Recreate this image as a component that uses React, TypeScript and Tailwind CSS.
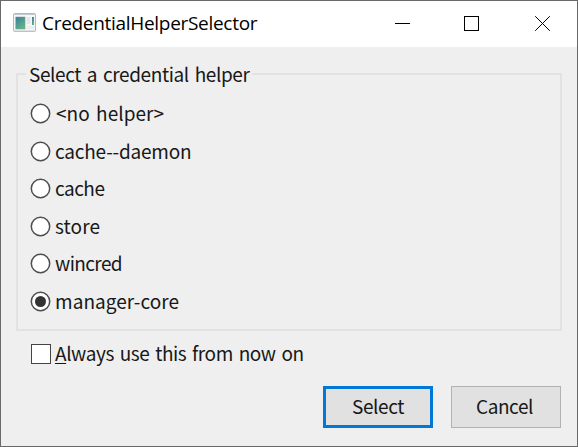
const helpers = [
  { name: '<no helper>', text: 'ml-[5px] tracking-[0.05px] [word-spacing:2px]' },
  { name: 'cache--daemon', text: 'ml-[4px] tracking-[-0.2px]' },
  { name: 'cache', text: 'ml-[4px] tracking-[-0.5px]' },
  { name: 'store', text: 'ml-[4px] tracking-[0.1px]' },
  { name: 'wincred', text: 'ml-[4px] tracking-[-0.6px]' },
  { name: 'manager-core', text: 'ml-[4px] tracking-[0.05px]' },
];

function AppIcon() {
  return (
    <svg width="24" height="20" viewBox="0 0 24 20">
      <defs>
        <linearGradient id="pane" x1="0" y1="0" x2="0.6" y2="1">
          <stop offset="0" stopColor="#397d9e" />
          <stop offset="1" stopColor="#62b583" />
        </linearGradient>
      </defs>
      <rect x="0.5" y="0.5" width="22" height="18" rx="1" fill="#f5f6f7" stroke="#b1b8c2" />
      <path d="M1 1.5H22M1 18H22" stroke="#c4cad1" />
      <rect x="2.8" y="4" width="9.2" height="12" fill="url(#pane)" stroke="#78958f" strokeWidth="0.5" />
      <rect x="13.5" y="4" width="4" height="7" fill="#e5e8e9" />
      <rect x="19" y="4" width="2" height="8" fill="url(#pane)" />
      <rect x="13.5" y="13" width="7.5" height="3" fill="#eceeee" />
    </svg>
  );
}

function TitleBar() {
  return (
    <header className="flex h-[46px] shrink-0 bg-white pl-[12px]">
      <div className="mt-[12px] w-[24px]"><AppIcon /></div>
      <h1 className="ml-[5px] mt-[8px] whitespace-nowrap font-['Open_Sans','Noto_Sans',sans-serif] text-[19px] leading-[28px] tracking-[-0.3px] text-black">CredentialHelperSelector</h1>
      <svg className="ml-auto shrink-0" width="210" height="46" viewBox="367 1 210 46" fill="none" stroke="#000">
        <path d="M395 23.5H410" />
        <rect x="464.5" y="16.5" width="14" height="14" />
        <path d="M535.2 16.2L549.8 30.8M549.8 16.2L535.2 30.8" />
      </svg>
    </header>
  );
}

export default function App() {
  return (
    <main className="flex h-[447px] w-[578px] flex-col overflow-hidden border border-[#69696a] bg-[#efefef] font-['Noto_Sans_CJK_SC',sans-serif] text-[19px] leading-[24px] text-[#181818]">
      <TitleBar />
      <fieldset className="mx-[15px] mt-[15px] h-[269px] min-w-0 shrink-0 border-2 border-[#e2e2e2] pl-[12px]">
        <legend className="-ml-[4px] h-[24px] whitespace-nowrap px-[3px] tracking-[-0.4px] [word-spacing:2px]">Select a credential helper</legend>
        <div className="mt-[15px] flex flex-col">
          {helpers.map((helper) => (
            <label key={helper.name} className="flex h-[37.5px] items-start">
              <svg className="mt-[2px] shrink-0" width="21" height="21" viewBox="0 0 21 21">
                <circle cx="10.5" cy="10.5" r="9.2" fill="#fff" stroke="#4e4e4e" strokeWidth="1.5" />
                {helper.name === 'manager-core' && <circle cx="10.5" cy="10.5" r="5.5" fill="#333" />}
              </svg>
              <span className={`whitespace-nowrap ${helper.text}`}>{helper.name}</span>
            </label>
          ))}
        </div>
      </fieldset>
      <label className="ml-[30px] mt-[10px] flex h-[25px] shrink-0">
        <span className="mt-[3px] size-[20px] shrink-0 border-[1.5px] border-[#444] bg-white" />
        <span className="ml-[4px] whitespace-nowrap tracking-[-0.43px] [word-spacing:2px]"><span className="underline decoration-1 underline-offset-2">A</span>lways use this from now on</span>
      </label>
      <div className="mr-[16px] mt-[20px] flex justify-end gap-[18px]">
        <button className="h-[42px] w-[110px] border-[3px] border-[#0078d7] bg-[#e1e1e1] pb-[2px] tracking-[-0.4px]">Select</button>
        <button className="h-[42px] w-[110px] border-[1.5px] border-[#b2b2b2] bg-[#e1e1e1] pb-[2px] pr-[3px] tracking-[-0.4px]">Cancel</button>
      </div>
    </main>
  );
}
